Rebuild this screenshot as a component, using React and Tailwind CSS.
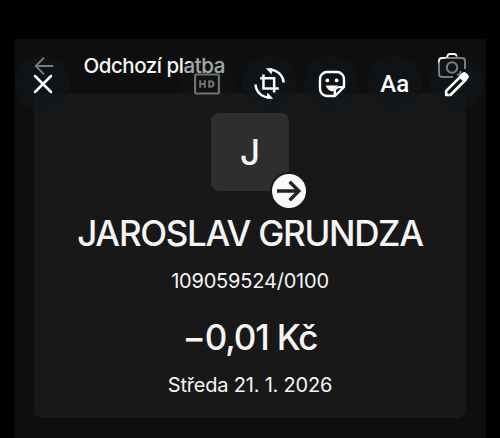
import { useState } from 'react';
import clsx from 'clsx';

function ToolButton({ label, className, disabled, children }) {
    return (
        <button
            aria-label={label}
            disabled={disabled}
            className={clsx(
                'flex h-[55px] w-[55px] shrink-0 items-center justify-center rounded-full text-white',
                disabled ? 'bg-[#10161a]/35' : 'bg-[#10171b]/55',
                className
            )}
        >
            {children}
        </button>
    );
}

function CloseIcon() {
    return (
        <svg width="20" height="20" viewBox="0 0 20 20" fill="none" stroke="currentColor" strokeWidth="2.5" strokeLinecap="round">
            <path d="M2 2l16 16M18 2L2 18" />
        </svg>
    );
}

function HdIcon() {
    return (
        <svg width="26" height="22" viewBox="0 0 26 22" fill="none" stroke="currentColor" strokeWidth="2.2">
            <rect x="1.1" y="1.5" width="23.8" height="19" rx="1" />
            <path d="M6.2 7.2v7.6M10.8 7.2v7.6M6.2 11h4.6M15.2 8.2v5.6h1.4c2 0 2.9-1.1 2.9-2.8s-.9-2.8-2.9-2.8z" strokeWidth="2" />
        </svg>
    );
}

function CropRotateIcon() {
    return (
        <svg width="33" height="33" viewBox="0 0 34 34" fill="none" stroke="currentColor" strokeWidth="2.6">
            <path d="M10.8 7.6v14.6h15.8" />
            <path d="M7.4 11.6h14.4v14.6" />
            <path d="M16 2.8C24.6 2.3 31 8.4 31.4 16" />
            <path d="M18 31.2C9.4 31.7 3 25.6 2.6 18" />
            <path d="M13.2 1.4h6.6l-.6 6.2z" fill="currentColor" stroke="none" />
            <path d="M20.8 32.6h-6.6l.6-6.2z" fill="currentColor" stroke="none" />
        </svg>
    );
}

function StickerIcon() {
    return (
        <svg width="28" height="28" viewBox="0 0 28 28" fill="none" stroke="currentColor" strokeWidth="2.4" strokeLinejoin="round">
            <path d="M9 2h10a7 7 0 0 1 7 7v8l-9 9H9a7 7 0 0 1-7-7V9a7 7 0 0 1 7-7z" />
            <path d="M16.8 25.5v-3.8a4.6 4.6 0 0 1 4.6-4.6h4.2" />
            <circle cx="9.4" cy="10.4" r="1.9" fill="currentColor" stroke="none" />
            <circle cx="18.6" cy="10.4" r="1.9" fill="currentColor" stroke="none" />
            <path d="M7.8 15.4h12.6c-2.6 1.4-4.4 3.4-4.9 5.8-3.6.2-6.6-2.2-7.7-5.8z" fill="currentColor" stroke="none" />
        </svg>
    );
}

function PencilIcon() {
    return (
        <svg width="26" height="26" viewBox="0 0 26 26" fill="none" stroke="currentColor" strokeWidth="2.6" strokeLinejoin="round">
            <path d="M2.2 24v-4.2L17.2 4.8l4.2 4.2L6.4 24z" />
            <path d="M16.2 5.8l2.9-2.9c.7-.7 1.5-.7 2.2 0l1.8 1.8c.7.7.7 1.5 0 2.2l-2.9 2.9z" fill="currentColor" />
        </svg>
    );
}

function BackIcon() {
    return (
        <svg width="20" height="20" viewBox="0 0 20 20" fill="none" stroke="currentColor" strokeWidth="1.9">
            <path d="M19.2 10H2.2M10 1.6L1.8 10l8.2 8.4" />
        </svg>
    );
}

function CameraIcon() {
    return (
        <svg width="28" height="26" viewBox="0 0 28 26" fill="none" stroke="currentColor" strokeWidth="2">
            <path d="M15 24H4a3 3 0 0 1-3-3V8a3 3 0 0 1 3-3h20a3 3 0 0 1 3 3v8" />
            <path d="M8.5 5l1.2-2.6A2.2 2.2 0 0 1 11.6 1h4.8a2.2 2.2 0 0 1 1.9 1.4L19.5 5" />
            <circle cx="14" cy="14.5" r="5.2" />
            <path d="M22.4 18v7M19 21.5h7" />
        </svg>
    );
}

export default function App() {
    const [payment] = useState({
        name: 'JAROSLAV GRUNDZA',
        account: '109059524/0100',
        amount: '−0,01 Kč',
        date: 'Středa 21. 1. 2026',
    });

    return (
        <div className="relative h-[438px] w-[500px] overflow-hidden bg-black pt-[39px] pr-[14px] pl-[15px] font-['Inter',sans-serif] text-[#f5f5f5]">
            <div className="h-[399px] bg-[#0e0e0e] px-[19px]">
                {/* Header */}
                <div className="flex h-[54px] items-center">
                    <BackIcon />
                    <h1 className="ml-[29.5px] text-[20.5px] leading-7 font-medium tracking-[-0.45px] whitespace-nowrap">
                        Odchozí platba
                    </h1>
                    <div className="mr-[1.5px] ml-auto">
                        <CameraIcon />
                    </div>
                </div>

                {/* Payment card */}
                <div className="flex h-[325px] w-[432px] flex-col items-center rounded-lg bg-[#181818] pt-5">
                    <div className="relative flex h-[78px] w-[78px] items-center justify-center rounded-lg bg-[#2e2e2e] text-[35px] font-medium">
                        J
                        <span className="absolute -right-[19px] -bottom-[19px] flex h-[38px] w-[38px] items-center justify-center rounded-full border-2 border-[#181818] bg-[#fafafa] text-[#222]">
                            <svg width="24" height="22" viewBox="0 0 24 22" fill="none" stroke="currentColor" strokeWidth="3.4">
                                <path d="M0 11h21M12.6 1.8l9.2 9.2-9.2 9.2" />
                            </svg>
                        </span>
                    </div>
                    <p className="mt-[18px] text-[35px] leading-[48px] font-medium tracking-[-1.3px] whitespace-nowrap">{payment.name}</p>
                    <p className="mt-2.5 text-[20px] leading-7 tracking-[-0.2px] whitespace-nowrap">{payment.account}</p>
                    <p className="mt-[18px] text-[35px] leading-[48px] font-medium tracking-[-1.15px] whitespace-nowrap">{payment.amount}</p>
                    <p className="mt-2.5 text-[20px] leading-7 tracking-[-0.2px] whitespace-nowrap">{payment.date}</p>
                </div>
            </div>

            {/* Editor toolbar floating over the page */}
            <div className="absolute top-[56px] left-[15px] flex w-[469px] items-center">
                <ToolButton label="Close">
                    <CloseIcon />
                </ToolButton>
                <div className="ml-auto flex items-center gap-[7.3px]">
                    <ToolButton label="HD" disabled className="text-white/40">
                        <HdIcon />
                    </ToolButton>
                    <ToolButton label="Crop">
                        <CropRotateIcon />
                    </ToolButton>
                    <ToolButton label="Sticker">
                        <StickerIcon />
                    </ToolButton>
                    <ToolButton label="Text" className="pl-px font-['Roboto',sans-serif] text-[24px] font-medium">
                        Aa
                    </ToolButton>
                    <ToolButton label="Draw">
                        <PencilIcon />
                    </ToolButton>
                </div>
            </div>
        </div>
    );
}
